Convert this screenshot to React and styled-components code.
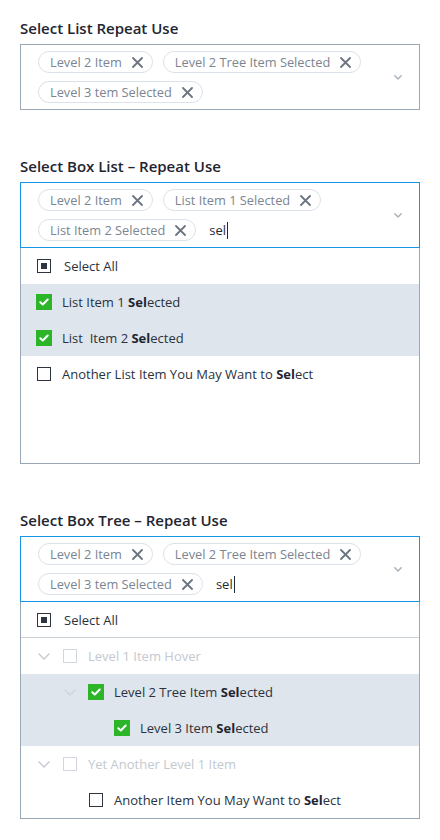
import React from 'react'
import styled, { createGlobalStyle } from 'styled-components'

const GlobalStyle = createGlobalStyle`
  body {
    margin: 0;
    background: #ffffff;
    font-family: "Open Sans", "Noto Sans", sans-serif;
    color: #2a323c;
  }
`

const Page = styled.div`
  width: 400px;
  padding: 18px 20px 20px 20px;
  display: flex;
  flex-direction: column;
  gap: 46px;
`

const Section = styled.section`
  display: flex;
  flex-direction: column;
`

const Title = styled.h3`
  margin: 0 0 6px 0;
  font-size: 15px;
  line-height: 20px;
  font-weight: 600;
  color: #1f2530;
`

const Field = styled.div`
  box-sizing: border-box;
  width: 400px;
  height: 66px;
  border: 1px solid ${p => (p.$focused ? '#1496e4' : '#9aa8b5')};
  padding: 6px 17px 6px 17px;
  display: flex;
  align-items: center;
`

const Chips = styled.div`
  flex: 1;
  display: flex;
  flex-wrap: wrap;
  align-items: center;
  column-gap: 10px;
  row-gap: 8px;
  padding-right: 24px;
`

const Chip = styled.span`
  box-sizing: border-box;
  height: 22px;
  border: 1px solid #dbe2ea;
  border-radius: 11px;
  padding: 0 9px 0 11px;
  display: inline-flex;
  align-items: center;
  gap: 10px;
  font-size: 12.8px;
  color: #7b8591;
  white-space: nowrap;
`

const TypedText = styled.span`
  display: inline-flex;
  align-items: center;
  margin-left: 3px;
  font-size: 13px;
  color: #1f2933;
  height: 22px;
`

const Caret = styled.span`
  display: inline-block;
  width: 1px;
  height: 17px;
  margin-left: 1px;
  background: #1f2933;
`

const Dropdown = styled.div`
  box-sizing: border-box;
  width: 400px;
  height: ${p => p.$height}px;
  border: 1px solid #9aa8b5;
  border-top: none;
  display: flex;
  flex-direction: column;
`

const Row = styled.div`
  box-sizing: border-box;
  height: 36px;
  flex: none;
  display: flex;
  align-items: center;
  padding-left: ${p => 15 + (p.$level || 0) * 26}px;
  background: ${p => (p.$selected ? '#dfe5ec' : 'transparent')};
  border-bottom: ${p => (p.$divider ? '1px solid #c9d1d9' : 'none')};
  font-size: 13px;
  color: ${p => (p.$muted ? '#c3c9d0' : '#2a323c')};
  white-space: nowrap;
`

const Slot = styled.span`
  width: 16px;
  height: 16px;
  flex: none;
  display: inline-flex;
  align-items: center;
  justify-content: center;
  margin-right: ${p => p.$gap}px;
`

const Box = styled.span`
  box-sizing: border-box;
  width: 14px;
  height: 14px;
  border: 1.5px solid ${p => (p.$muted ? '#d2d7dd' : '#2d3540')};
  display: inline-flex;
  align-items: center;
  justify-content: center;
`

const Dot = styled.span`
  width: 6px;
  height: 6px;
  background: #2d3540;
`

const Checked = styled.span`
  width: 16px;
  height: 16px;
  background: #2db52a;
  display: inline-flex;
  align-items: center;
  justify-content: center;
`

const Label = styled.span`
  b {
    font-weight: 700;
    color: #1f2530;
  }
`

const Close = () => (
  <svg width="11" height="11" viewBox="0 0 11 11">
    <path d="M1 1L10 10M10 1L1 10" stroke="#6b7480" strokeWidth="1.8" strokeLinecap="round" />
  </svg>
)

const Chevron = ({ color = '#a9b3bd', w = 8, h = 5 }) => (
  <svg width={w} height={h} viewBox="0 0 8 5">
    <path d="M0.8 0.8L4 4L7.2 0.8" fill="none" stroke={color} strokeWidth="1.5" strokeLinecap="round" strokeLinejoin="round" />
  </svg>
)

const TreeChevron = ({ color }) => (
  <svg width="12" height="7" viewBox="0 0 12 7">
    <path d="M1 1L6 6L11 1" fill="none" stroke={color} strokeWidth="1.4" strokeLinecap="round" strokeLinejoin="round" />
  </svg>
)

const Tick = () => (
  <svg width="10" height="8" viewBox="0 0 10 8">
    <path d="M1.3 4.2L3.8 6.5L8.7 1.5" fill="none" stroke="#ffffff" strokeWidth="2" strokeLinecap="round" strokeLinejoin="round" />
  </svg>
)

const CheckMark = ({ state, muted }) => {
  if (state === 'checked') return <Checked><Tick /></Checked>
  if (state === 'partial') return <Box><Dot /></Box>
  return <Box $muted={muted} />
}

const Highlight = ({ text }) => {
  const i = text.indexOf('Sel')
  if (i < 0) return <Label>{text}</Label>
  return (
    <Label>
      {text.slice(0, i)}<b>Sel</b>{text.slice(i + 3)}
    </Label>
  )
}

const SelectField = ({ chips, typed, focused }) => (
  <Field $focused={focused}>
    <Chips>
      {chips.map(c => (
        <Chip key={c}>{c}<Close /></Chip>
      ))}
      {typed && <TypedText>{typed}<Caret /></TypedText>}
    </Chips>
    <Chevron />
  </Field>
)

const listItems = [
  { text: 'List Item 1 Selected', checked: true },
  { text: 'List\u00a0 Item 2 Selected', checked: true },
  { text: 'Another List Item You May Want to Select', checked: false },
]

const treeItems = [
  { text: 'Level 1 Item Hover', level: 0, chevron: true, muted: true },
  { text: 'Level 2 Tree Item Selected', level: 1, chevron: true, checked: true, faintChevron: true },
  { text: 'Level 3 Item Selected', level: 2, checked: true },
  { text: 'Yet Another Level 1 Item', level: 0, chevron: true, muted: true },
  { text: 'Another Item You May Want to Select', level: 1 },
]

export default function App() {
  return (
    <>
      <GlobalStyle />
      <Page>
        <Section>
          <Title>Select List Repeat Use</Title>
          <SelectField chips={['Level 2 Item', 'Level 2 Tree Item Selected', 'Level 3 tem Selected']} />
        </Section>

        <Section>
          <Title>Select Box List – Repeat Use</Title>
          <SelectField focused typed="sel" chips={['Level 2 Item', 'List Item 1 Selected', 'List Item 2 Selected']} />
          <Dropdown $height={216}>
            <Row>
              <Slot $gap={12}><CheckMark state="partial" /></Slot>
              <Label>Select All</Label>
            </Row>
            {listItems.map(item => (
              <Row key={item.text} $selected={item.checked}>
                <Slot $gap={10}><CheckMark state={item.checked ? 'checked' : 'empty'} /></Slot>
                <Highlight text={item.text} />
              </Row>
            ))}
          </Dropdown>
        </Section>

        <Section>
          <Title>Select Box Tree – Repeat Use</Title>
          <SelectField focused typed="sel" chips={['Level 2 Item', 'Level 2 Tree Item Selected', 'Level 3 tem Selected']} />
          <Dropdown $height={217}>
            <Row $divider>
              <Slot $gap={12}><CheckMark state="partial" /></Slot>
              <Label>Select All</Label>
            </Row>
            {treeItems.map(item => (
              <Row key={item.text} $level={item.level} $selected={item.checked} $muted={item.muted}>
                <Slot $gap={10}>
                  {item.chevron && <TreeChevron color={item.faintChevron ? '#cfd6de' : '#c3c9d0'} />}
                </Slot>
                <Slot $gap={10}>
                  <CheckMark state={item.checked ? 'checked' : 'empty'} muted={item.muted} />
                </Slot>
                {item.muted ? <Label>{item.text}</Label> : <Highlight text={item.text} />}
              </Row>
            ))}
          </Dropdown>
        </Section>
      </Page>
    </>
  )
}
